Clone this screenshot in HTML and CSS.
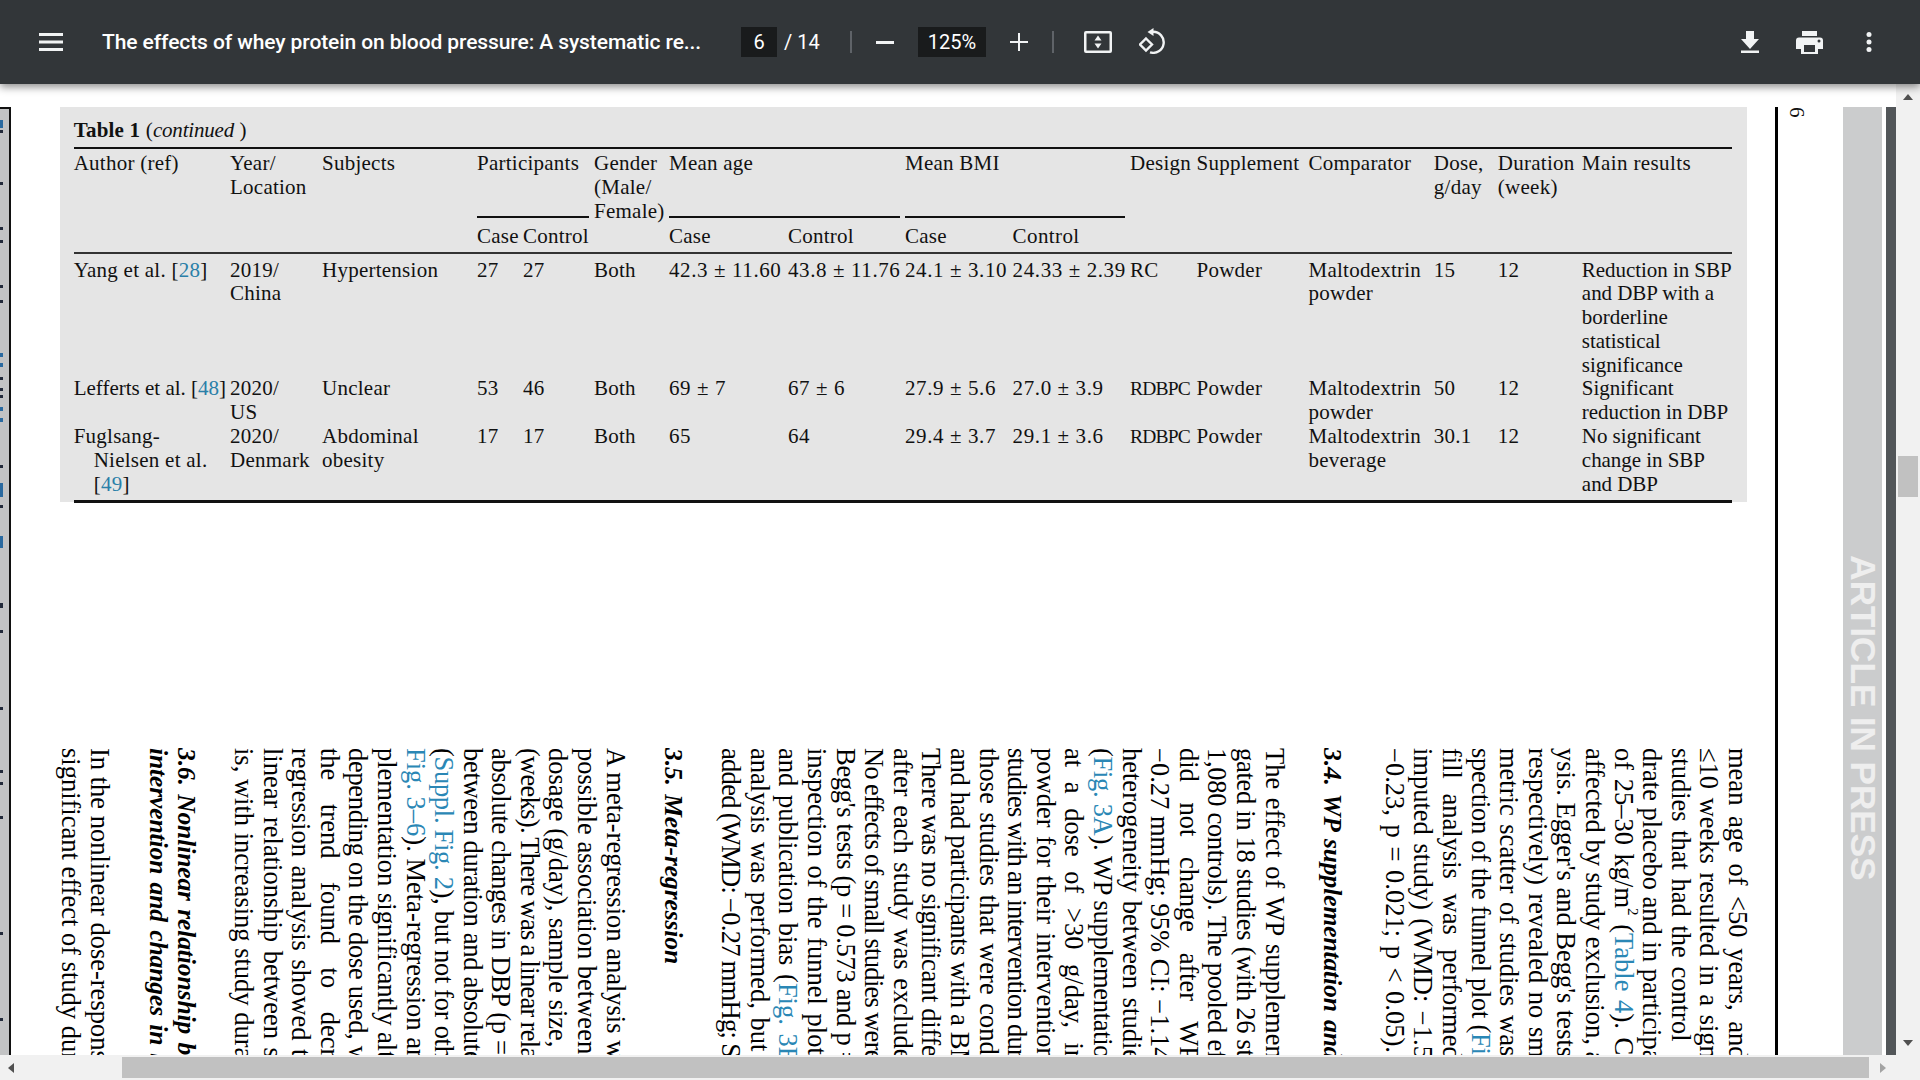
FILE: index.html
```html
<!DOCTYPE html>
<html lang="en">
<head>
<meta charset="utf-8">
<title>The effects of whey protein on blood pressure</title>
<link rel="stylesheet" href="styles.css">
</head>
<body>
<header class="toolbar">
  <svg class="ico menu" viewBox="0 0 24 18"><path d="M0 0h24v3H0zM0 7.500h24v3H0zM0 15h24v3H0z"/></svg>
  <div class="title">The effects of whey protein on blood pressure: A systematic re...</div>
  <div class="pagebox">6</div>
  <div class="pagecount">/ 14</div>
  <div class="sep sep1"></div>
  <svg class="ico minus" viewBox="0 0 18 3"><path d="M0 0h18v3H0z"/></svg>
  <div class="zoombox">125%</div>
  <svg class="ico plus" viewBox="0 0 18 18"><path d="M8 0h2v8h8v2h-8v8H8v-8H0V8h8z"/></svg>
  <div class="sep sep2"></div>
  <svg class="ico fit" viewBox="0 0 28 22"><path fill-rule="evenodd" d="M2 0h24a2 2 0 0 1 2 2v18a2 2 0 0 1-2 2H2a2 2 0 0 1-2-2V2a2 2 0 0 1 2-2zm.500 2.500v17h23v-17z"/><path d="M14 4.500l3.500 5h-7zM14 17.500l-3.500-5h7z"/></svg>
  <svg class="ico rotate" viewBox="0 0 26 26"><path class="ln" d="M14 3.800a10.500 10.500 0 1 1-3 20.500"/><path d="M14.500 0v8l-6-4z"/><path class="ln" d="M7 10.500l6 6-6 6-6-6z"/></svg>
  <div class="spacer"></div>
  <svg class="ico download" viewBox="0 0 18 22"><path d="M5 0h8v8h5l-9 10L0 8h5zM0 19.500h18V22H0z"/></svg>
  <svg class="ico print" viewBox="0 0 27 23"><path fill-rule="evenodd" d="M6 0h15v5H6zM3 6.500h21a3 3 0 0 1 3 3V18h-5v5H5v-5H0V9.500a3 3 0 0 1 3-3zm5 7.500v7h11v-7zm15-5.500a1.500 1.500 0 1 0 0 3 1.500 1.500 0 0 0 0-3z"/></svg>
  <svg class="ico more" viewBox="0 0 6 20"><circle cx="3" cy="2.500" r="2.500"/><circle cx="3" cy="10" r="2.500"/><circle cx="3" cy="17.500" r="2.500"/></svg>
</header>

<div class="viewer">
  <div class="vrow">
    <main class="page">
      <div class="strip">
        <svg class="ticks" viewBox="0 0 8 946">
          <g class="blue"><path d="M0 11h3v8H0zM0 244h3v4H0zM0 254h3v4H0zM0 298h3v4H0zM0 309h3v4H0zM0 374h3v14H0zM0 427h3v12H0z"/></g>
          <g class="dark"><path d="M0 21h3v3H0zM0 73h3v3H0zM0 118h3v3H0zM0 131h3v3H0zM0 176h3v3H0zM0 191h3v3H0zM0 268h3v3H0zM0 279h3v3H0zM0 286h3v3H0zM0 356h3v3H0zM0 396h3v3H0zM0 494h3v5H0zM0 521h3v3H0zM0 598h3v3H0zM0 661h3v3H0zM0 673h3v3H0zM0 707h3v3H0zM0 823h3v3H0zM0 909h3v3H0z"/></g>
        </svg>
      </div>
      <div class="content">
        <section class="tablewrap">
          <div class="caption"><b>Table 1</b> (<em>continued</em> )</div>
          <table class="data">
            <colgroup>
              <col class="c1"><col class="c2"><col class="c3"><col class="c4"><col class="c5"><col class="c6"><col class="c7"><col class="c8"><col class="c9"><col class="c10"><col class="c11"><col class="c12"><col class="c13"><col class="c14"><col class="c15"><col class="c16">
            </colgroup>
            <thead>
              <tr class="h1">
                <th rowspan="2">Author (ref)</th><th rowspan="2">Year/<br>Location</th><th rowspan="2">Subjects</th>
                <th colspan="2" class="group">Participants</th><th rowspan="2">Gender<br>(Male/<br>Female)</th>
                <th colspan="2" class="group">Mean age</th><th colspan="2" class="group">Mean BMI</th>
                <th rowspan="2">Design</th><th rowspan="2">Supplement</th><th rowspan="2">Comparator</th>
                <th rowspan="2">Dose,<br>g/day</th><th rowspan="2">Duration<br>(week)</th><th rowspan="2">Main results</th>
              </tr>
              <tr class="h2"><th>Case</th><th>Control</th><th>Case</th><th>Control</th><th>Case</th><th>Control</th></tr>
            </thead>
            <tbody>
              <tr>
                <td>Yang et al. [<a>28</a>]</td><td>2019/<br>China</td><td>Hypertension</td><td>27</td><td>27</td><td>Both</td>
                <td>42.3 ± 11.60</td><td>43.8 ± 11.76</td><td>24.1 ± 3.10</td><td>24.33 ± 2.39</td><td>RC</td><td>Powder</td>
                <td>Maltodextrin<br>powder</td><td>15</td><td>12</td><td>Reduction in SBP<br>and DBP with a<br>borderline<br>statistical<br>significance</td>
              </tr>
              <tr>
                <td class="tight">Lefferts et al. [<a>48</a>]</td><td>2020/<br>US</td><td>Unclear</td><td>53</td><td>46</td><td>Both</td>
                <td>69 ± 7</td><td>67 ± 6</td><td>27.9 ± 5.6</td><td>27.0 ± 3.9</td><td class="caps">RDBPC</td><td>Powder</td>
                <td>Maltodextrin<br>powder</td><td>50</td><td>12</td><td>Significant<br>reduction in DBP</td>
              </tr>
              <tr class="last">
                <td class="hang">Fuglsang-<br>Nielsen et al.<br>[<a>49</a>]</td><td>2020/<br>Denmark</td><td>Abdominal<br>obesity</td><td>17</td><td>17</td><td>Both</td>
                <td>65</td><td>64</td><td>29.4 ± 3.7</td><td>29.1 ± 3.6</td><td class="caps">RDBPC</td><td>Powder</td>
                <td>Maltodextrin<br>beverage</td><td>30.1</td><td>12</td><td>No significant<br>change in SBP<br>and DBP</td>
              </tr>
            </tbody>
          </table>
        </section>
        <section class="columns">
          <p class="w1">mean age of &lt;50 years, and</p>
          <p>≤10 weeks resulted in a significant</p>
          <p>studies that had the control</p>
          <p class="n1">drate placebo and in participants</p>
          <p>of 25–30 kg/m<sup>2</sup> (<a>Table 4</a>). Change</p>
          <p class="n1">affected by study exclusion, and</p>
          <p class="n1">ysis. Egger's and Begg's tests</p>
          <p>respectively) revealed no small</p>
          <p>metric scatter of studies was</p>
          <p class="t1">spection of the funnel plot (<a>Fig.</a></p>
          <p class="w2">fill analysis was performed</p>
          <p>imputed study) (WMD: −1.5</p>
          <p>−0.23, p = 0.021; p &lt; 0.05).</p>
          <h3 class="first">3.4. WP supplementation and</h3>
          <p>The effect of WP supplementation</p>
          <p class="t1">gated in 18 studies (with 26 studies</p>
          <p class="t1">1,080 controls). The pooled effect</p>
          <p class="w3">did not change after WP</p>
          <p class="n1">−0.27 mmHg; 95% CI: −1.14,</p>
          <p>heterogeneity between studies</p>
          <p class="t1">(<a>Fig. 3A</a>). WP supplementation</p>
          <p class="w2">at a dose of &gt;30 g/day, in</p>
          <p>powder for their intervention</p>
          <p class="t2">studies with an intervention duration</p>
          <p>those studies that were conducted</p>
          <p class="t1">and had participants with a BMI</p>
          <p class="t1">There was no significant difference</p>
          <p>after each study was excluded</p>
          <p class="t2">No effects of small studies were</p>
          <p class="t1">Begg's tests (p = 0.573 and p =</p>
          <p>inspection of the funnel plot</p>
          <p>and publication bias (<a>Fig. 3B</a>)</p>
          <p>analysis was performed, but</p>
          <p class="t2">added (WMD: −0.27 mmHg; SE</p>
          <h3>3.5. Meta-regression</h3>
          <p class="n1">A meta-regression analysis was</p>
          <p class="n1">possible association between</p>
          <p class="n1">dosage (g/day), sample size, and</p>
          <p class="t2">(weeks). There was a linear relationship</p>
          <p class="t1">absolute changes in DBP (p =</p>
          <p class="t1">between duration and absolute</p>
          <p class="t1">(<a>Suppl. Fig. 2</a>), but not for other</p>
          <p class="n1"><a>Fig. 3–6</a>). Meta-regression analysis</p>
          <p class="n1">plementation significantly altered</p>
          <p class="t1">depending on the dose used, with</p>
          <p class="w4">the trend found to decrease</p>
          <p>regression analysis showed that</p>
          <p>linear relationship between study</p>
          <p class="n1">is, with increasing study duration</p>
          <h3 class="join">3.6. Nonlinear relationship between</h3>
          <h3 class="tail">intervention and changes in blood</h3>
          <p class="n1">In the nonlinear dose-response</p>
          <p class="n1">significant effect of study duration</p>
        </section>
      </div>
      <div class="rule"></div>
      <div class="pageno">6</div>
      <aside class="banner"><span>ARTICLE IN PRESS</span></aside>
      <div class="gutter"></div>
    </main>
    <div class="vscroll">
      <div class="arrow up"></div>
      <div class="thumb-v"></div>
      <div class="arrow down"></div>
    </div>
  </div>
  <div class="hscroll">
    <div class="arrow left"></div>
    <div class="thumb-h"></div>
    <div class="arrow right"></div>
  </div>
</div>
</body>
</html>
```
FILE: styles.css
```css
* { box-sizing: border-box; }
html, body { margin: 0; height: 100%; overflow: hidden; }
body { display: flex; flex-direction: column; width: 1920px; height: 1080px; background: #fff; }

.toolbar {
  height: 84px; flex: none; display: flex; align-items: center;
  background: #323639; color: #fff; font-family: Roboto, sans-serif;
  box-shadow: 0 3px 8px rgba(0,0,0,.45); position: relative; z-index: 2;
  padding-left: 39px;
}
.ico { fill: #f1f3f4; flex: none; display: block; }
.ln { fill: none; stroke: #f1f3f4; stroke-width: 2.400; }
.menu { width: 24px; height: 18px; }
.title { margin-left: 39px; width: 600px; font-size: 21px; font-weight: 500; white-space: nowrap; letter-spacing: -.09px; }
.pagebox, .zoombox {
  height: 30px; background: #191b1c; display: flex; align-items: center; justify-content: center; font-size: 20px;
}
.pagebox { margin-left: 39px; width: 36px; }
.pagecount { margin-left: 7px; width: 58px; font-size: 20px; }
.sep { width: 2px; height: 22px; background: #5f6368; flex: none; }
.sep1 { margin-left: 8px; }
.minus { width: 18px; height: 3px; margin-left: 24px; }
.zoombox { width: 68px; margin-left: 24px; }
.plus { width: 18px; height: 18px; margin-left: 24px; }
.sep2 { margin-left: 23.500px; }
.fit { width: 28px; height: 22px; margin-left: 30px; }
.rotate { width: 26px; height: 26px; margin-left: 27px; margin-bottom: 2px; }
.spacer { flex: 1; }
.download { width: 18px; height: 22px; margin-right: 37px; }
.print { width: 27px; height: 23px; margin-right: 43px; }
.more { width: 6px; height: 20px; margin-right: 48px; }

.viewer { flex: 1; display: flex; flex-direction: column; min-height: 0; }
.vrow { flex: 1; display: flex; min-height: 0; }
.page { flex: 1; display: flex; min-width: 0; overflow: hidden; padding-top: 23px; }

.strip { width: 11px; flex: none; background: #c2c3c4; border-right: 2.500px solid #111; border-top: 2px solid #111; }
.ticks { display: block; width: 8px; height: 946px; }
.blue { fill: #2a6aa0; }
.dark { fill: #222a3a; }

.content { width: 1741px; flex: none; padding-left: 41px; display: flex; flex-direction: column; min-height: 0; }

.tablewrap {
  width: 1687px; height: 395px; margin-left: 8px; flex: none;
  background: #e5e5e5; padding: 0 15px 0 13.700px;
  font-family: "Liberation Serif", serif; font-size: 21px; line-height: 23.800px; color: #111;
}
.caption { height: 40px; padding-top: 10.500px; line-height: 24px; letter-spacing: .2px; }
.caption em { letter-spacing: -.2px; }
.data { width: 1658.300px; table-layout: fixed; border-collapse: collapse; border-top: 2.500px solid #111; border-bottom: 3px solid #111; letter-spacing: .25px; }
.data th, .data td { padding: 0; text-align: left; vertical-align: top; font-weight: 400; white-space: nowrap; }
.data a { color: #2a7fa8; }
.data td:nth-child(n+7):nth-child(-n+10) { letter-spacing: .6px; }
.data td:last-child { letter-spacing: -.05px; }
.data th:last-child { letter-spacing: .4px; }
.data td.tight { letter-spacing: 0; }
.data td.caps { letter-spacing: -.8px; font-size: 19.500px; }
.data td.hang { padding-left: 20px; text-indent: -20px; }
.c1 { width: 156.300px; } .c2 { width: 92px; } .c3 { width: 155px; } .c4 { width: 46px; } .c5 { width: 71px; } .c6 { width: 75px; }
.c7 { width: 119px; } .c8 { width: 117px; } .c9 { width: 107.600px; } .c10 { width: 117.400px; } .c11 { width: 66.500px; } .c12 { width: 112px; }
.c13 { width: 125.400px; } .c14 { width: 64px; } .c15 { width: 84px; } .c16 { width: 150px; }
.h1 th { padding-top: 3px; height: 68px; }
.h1 th.group { position: relative; }
.h1 th.group::after { content: ""; position: absolute; left: 0; right: 5px; top: 67px; height: 2px; background: #111; }
.h2 th { height: 37px; padding-top: 8.500px; border-bottom: 2.500px solid #333; }
.h1 th[rowspan] { border-bottom: 2.500px solid #333; }
tbody tr:first-child td { padding-top: 4.500px; }
tbody tr.last td { padding-bottom: 3.500px; }

.columns {
  margin-top: 246px; flex: 1; min-height: 0; overflow: hidden;
  writing-mode: vertical-rl; margin-left: -20px; width: 1720px;
  font-family: "Liberation Serif", serif; font-size: 26.500px; line-height: 28.600px; color: #000;
  white-space: nowrap; word-spacing: 2px;
}
.columns p { margin: 0; }
.columns a { color: #2a87b5; }
.columns sup { font-size: 15px; line-height: 0; }
.columns h3 { margin: 0; padding-block: 29.200px; font-size: 25.500px; font-weight: 700; font-style: italic; letter-spacing: -.1px; }
.columns h3.first { padding-block-start: 34px; }
.columns h3.join { padding-block-end: 0; }
.columns h3.tail { padding-block-start: 0; }
.columns .w1 { word-spacing: 4px; }
.columns .w2 { word-spacing: 8px; }
.columns .w3 { word-spacing: 14px; }
.columns .w4 { word-spacing: 17px; }
.columns .n1 { word-spacing: 0; }
.columns .t1 { word-spacing: 0; letter-spacing: -.3px; }
.columns .t2 { word-spacing: -1px; letter-spacing: -.7px; }

.rule { width: 2.500px; background: #000; flex: none; margin-left: 23px; }
.pageno { flex: none; width: 30px; writing-mode: vertical-rl; font-family: "Liberation Serif", serif; font-size: 21px; line-height: 30px; margin-left: 4px; color: #111; }
.banner { flex: none; width: 39px; background: #cbcccd; margin-left: 31.500px; display: flex; justify-content: center; }
.banner span {
  writing-mode: vertical-rl; font-family: "Liberation Sans", sans-serif; font-weight: 700; font-size: 35.600px; line-height: 39px;
  color: #eeeeee; margin-top: 448px; white-space: nowrap; letter-spacing: -.3px;
}
.gutter { flex: 1; background: linear-gradient(to right, #fff 0 4.500px, #525659 4.500px); }

.vscroll { width: 24px; flex: none; background: #f1f1f1; display: flex; flex-direction: column; align-items: center; }
.thumb-v { width: 20px; height: 41px; background: #c1c1c1; margin-top: 356px; }
.arrow { width: 0; height: 0; border: 5px solid transparent; flex: none; }
.arrow.up { border-bottom: 6px solid #505050; border-top-width: 0; margin-top: 10px; }
.arrow.down { border-top: 6px solid #505050; border-bottom-width: 0; margin-top: auto; margin-bottom: 9px; }

.hscroll { height: 25px; flex: none; background: #f1f1f1; display: flex; align-items: center; }
.thumb-h { width: 1747px; height: 21px; background: #c1c1c1; margin-left: 108px; }
.arrow.left { border-right: 6px solid #505050; border-left-width: 0; margin-left: 8px; }
.arrow.right { border-left: 6px solid #a3a3a3; border-right-width: 0; margin-left: 11px; }
```
